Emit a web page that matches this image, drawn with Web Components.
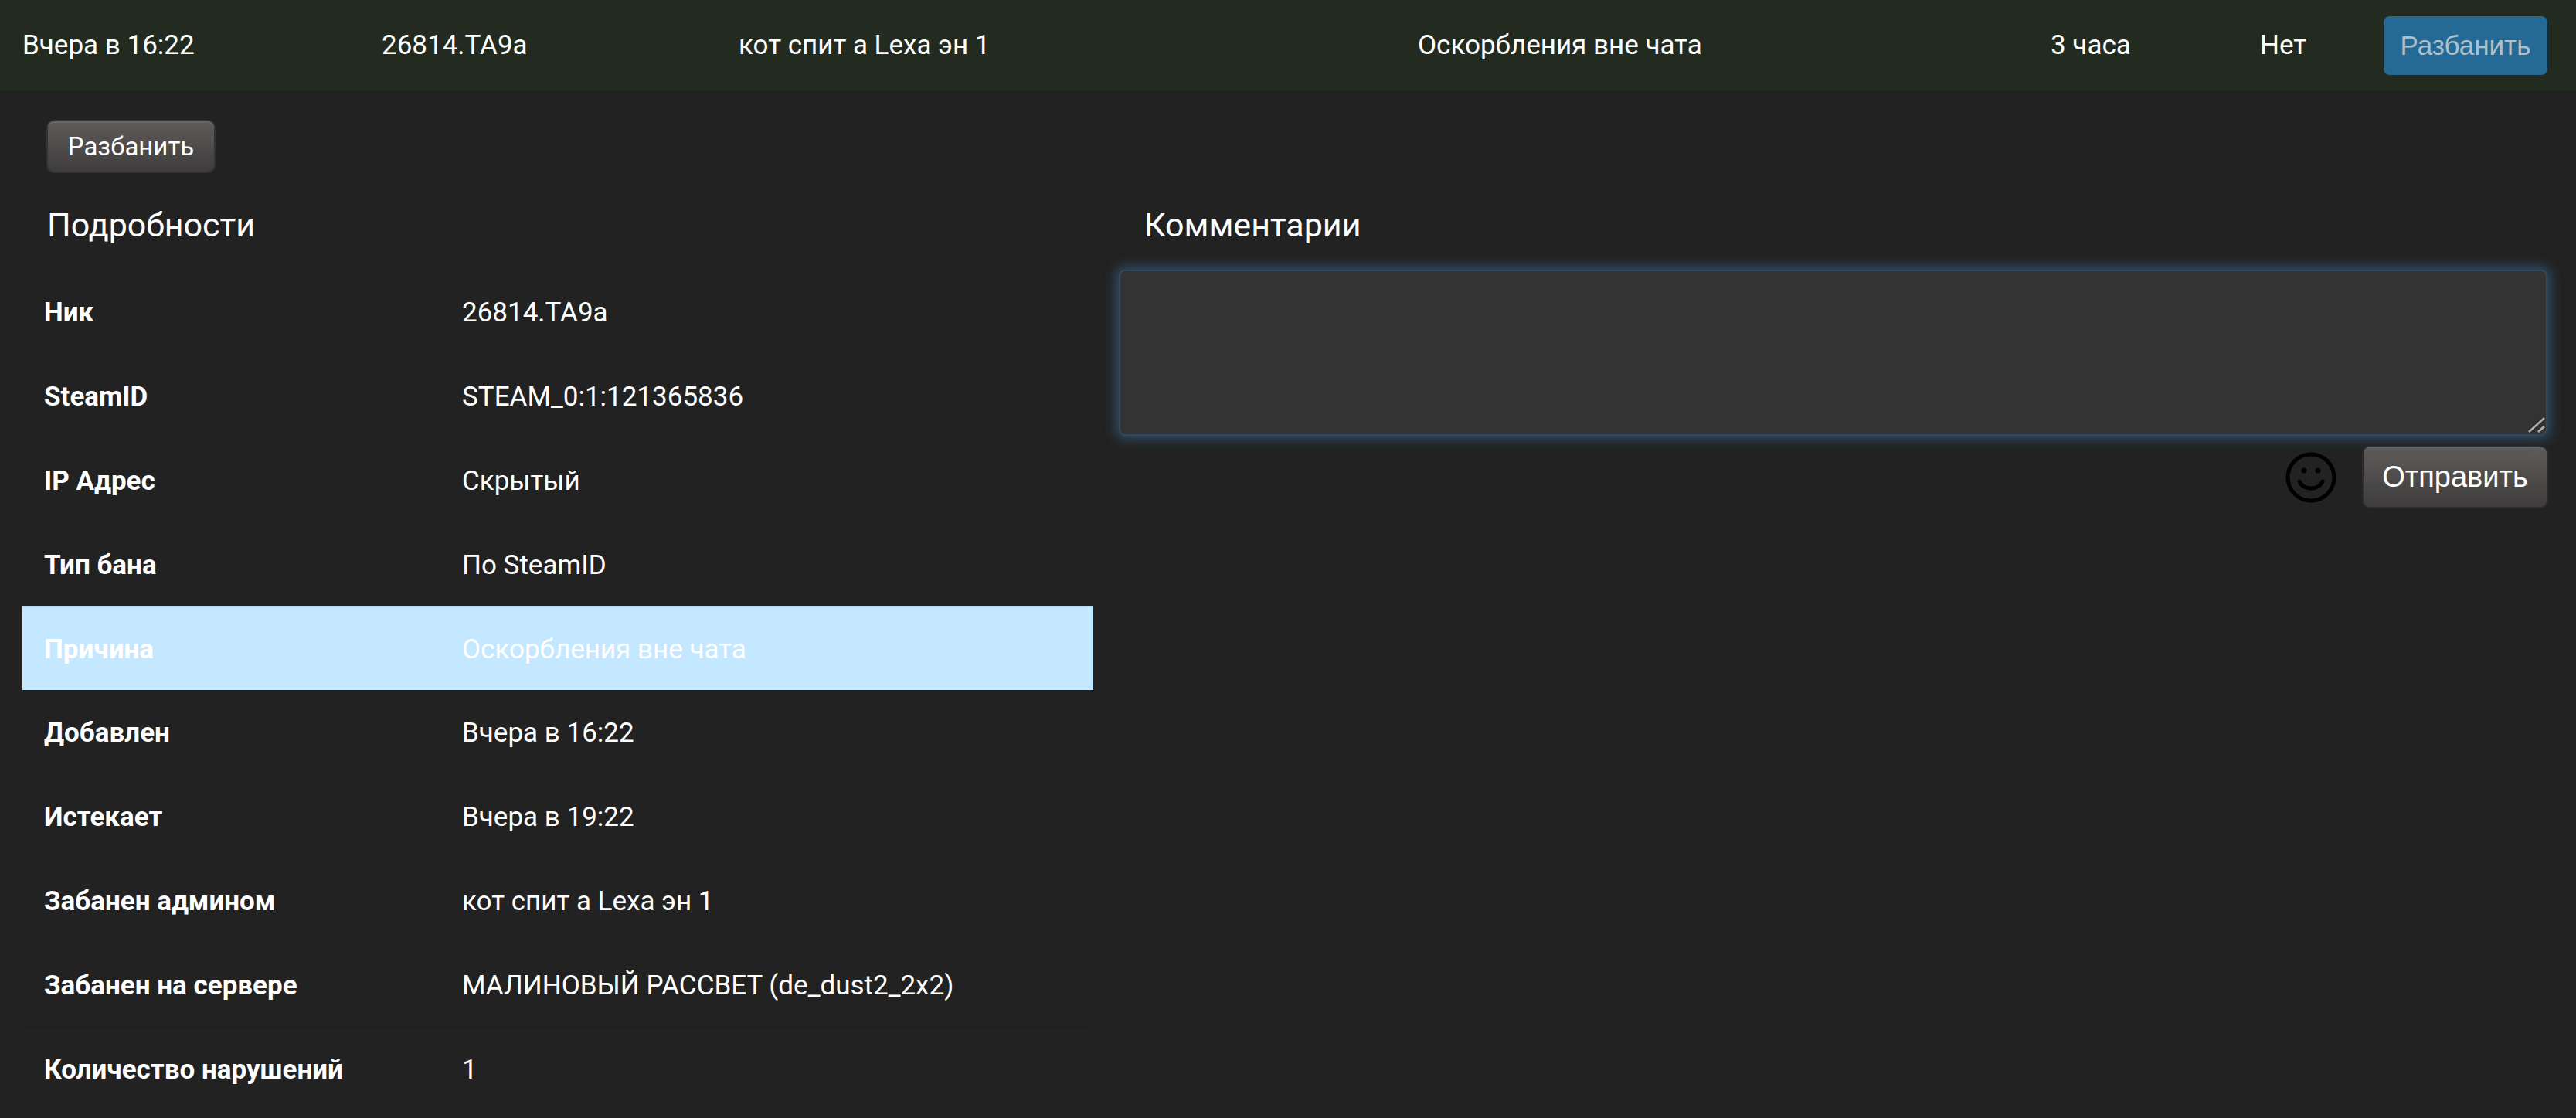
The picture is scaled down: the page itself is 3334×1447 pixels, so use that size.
<!DOCTYPE html>
<html lang="ru">
<head>
<meta charset="utf-8">
<title>Бан</title>
<style>
html, body { margin: 0; height: 100%; overflow: hidden; background: #222; }
body { font-family: Roboto, "Liberation Sans", sans-serif; font-size: 35px; color: #fff; }
</style>
</head>
<body>
<ban-page>
  <ban-summary>
    <span>Вчера в 16:22</span>
    <span>26814.TA9a</span>
    <span>кот спит а Lexa эн 1</span>
    <span>Оскорбления вне чата</span>
    <span>3 часа</span>
    <span>Нет</span>
    <ui-button variant="primary">Разбанить</ui-button>
  </ban-summary>
  <ban-details>
    <ui-button slot="action" variant="small">Разбанить</ui-button>
    <detail-row label="Ник">26814.TA9a</detail-row>
    <detail-row label="SteamID">STEAM_0:1:121365836</detail-row>
    <detail-row label="IP Адрес">Скрытый</detail-row>
    <detail-row label="Тип бана">По SteamID</detail-row>
    <detail-row label="Причина" highlight>Оскорбления вне чата</detail-row>
    <detail-row label="Добавлен">Вчера в 16:22</detail-row>
    <detail-row label="Истекает">Вчера в 19:22</detail-row>
    <detail-row label="Забанен админом">кот спит а Lexa эн 1</detail-row>
    <detail-row label="Забанен на сервере">МАЛИНОВЫЙ РАССВЕТ (de_dust2_2x2)</detail-row>
    <detail-row label="Количество нарушений">1</detail-row>
    <comment-box slot="comments"></comment-box>
  </ban-details>
</ban-page>

<script>
class BanPage extends HTMLElement {
  constructor() {
    super();
    this.attachShadow({ mode: 'open' }).innerHTML = `
<style>
:host { display: block; width: 3334px; height: 1447px; background: #222; color: #fff; }
</style>
<slot></slot>`;
  }
}

class BanSummary extends HTMLElement {
  constructor() {
    super();
    this.attachShadow({ mode: 'open' }).innerHTML = `
<style>
:host {
  display: grid;
  grid-template-columns: 465px 462px 879px 819px 271px 158px 1fr;
  align-items: center;
  height: 117px;
  padding: 0 37px 0 29px;
  box-sizing: border-box;
  background: #232b20;
}
</style>
<slot></slot>`;
  }
}

class UiButton extends HTMLElement {
  constructor() {
    super();
    this.attachShadow({ mode: 'open' }).innerHTML = `
<style>
:host {
  display: inline-flex;
  align-items: center;
  justify-content: center;
  box-sizing: border-box;
  border-radius: 8px;
  color: #fff;
  font-family: "Liberation Sans", sans-serif;
  background: linear-gradient(#5f5b5a, #3e3c3c);
  box-shadow: 0 0 0 2px #333, inset 0 2px 0 #6a6664;
}
:host([variant="primary"]) {
  width: 212px; height: 76px;
  font-size: 35px;
  color: #b0c0cb;
  background: #256a96;
  box-shadow: none;
  justify-self: end;
}
:host([variant="small"]) {
  width: 215px; height: 65px;
  margin: 2px;
  font-family: Roboto, sans-serif;
  font-size: 33px;
}
:host([variant="send"]) {
  width: 237px; height: 77px;
  margin: 1px;
  font-size: 38px;
  box-shadow: 0 0 0 2px #2c2c2c, inset 0 1px 0 #666;
}
</style>
<slot></slot>`;
  }
}

class DetailRow extends HTMLElement {
  constructor() {
    super();
    this.attachShadow({ mode: 'open' }).innerHTML = `
<style>
:host {
  display: grid;
  grid-template-columns: 568px 1fr;
  align-items: center;
  height: 108.8px;
  box-sizing: border-box;
  padding-top: 1px;
  border: 1px solid #202020;
  border-width: 2px 1px 0;
  color: #fff;
}
:host([highlight]) { background: #c4e8ff; border-color: #bcdcf0 #c4e8ff #c4e8ff; }
b { padding-left: 27px; font-weight: 700; }
</style>
<b></b><span><slot></slot></span>`;
    this.shadowRoot.querySelector('b').textContent = this.getAttribute('label');
  }
}

class CommentBox extends HTMLElement {
  constructor() {
    super();
    this.attachShadow({ mode: 'open' }).innerHTML = `
<style>
:host { display: flex; flex-direction: column; align-items: stretch; }
.field { position: relative; }
textarea {
  display: block;
  box-sizing: border-box;
  width: 100%;
  height: 215px;
  margin: 0;
  padding: 10px;
  resize: none;
  background: #333;
  border: 2px solid #2f4a60;
  border-radius: 8px;
  outline: none;
  box-shadow: 0 0 16px 4px rgba(70, 140, 200, .42);
  color: #fff;
  font: inherit;
}
/* resize grip, the native one is almost invisible here */
.grip { position: absolute; right: 2px; bottom: 3px; width: 24px; height: 22px; }
.send { display: flex; justify-content: flex-end; align-items: center; gap: 34px; margin-top: 14px; }
.smile { display: block; width: 66px; height: 66px; }
</style>
<div class="field">
  <textarea aria-label="Комментарий"></textarea>
  <svg class="grip" viewBox="0 0 24 22" fill="none">
    <path d="M2 20 L22 2 M14 20 L22 13" stroke="#222" stroke-width="5"/>
    <path d="M2 20 L22 2 M14 20 L22 13" stroke="#aaa" stroke-width="3"/>
  </svg>
</div>
<div class="send">
  <svg class="smile" viewBox="0 0 66 66" fill="none" stroke="#000" stroke-width="5" stroke-linecap="round">
    <circle cx="33" cy="33" r="30"/>
    <circle cx="24" cy="24" r="3.5" fill="#000" stroke="none"/>
    <circle cx="42" cy="24" r="3.5" fill="#000" stroke="none"/>
    <path d="M18 38 C23 50 43 50 48 38"/>
  </svg>
  <ui-button variant="send">Отправить</ui-button>
</div>`;
  }
}

class BanDetails extends HTMLElement {
  constructor() {
    super();
    this.attachShadow({ mode: 'open' }).innerHTML = `
<style>
:host {
  display: grid;
  grid-template-columns: 1386px 1fr;
  grid-template-rows: auto 125px auto;
  column-gap: 33px;
  padding: 36px 37px 0 29px;
}
.action { grid-column: 1 / 3; padding: 2px 0 0 31px; height: 69px; }
h2 {
  margin: 0;
  padding: 8px 0 0 32px;
  font-size: 43px;
  font-weight: 400;
  align-self: center;
}
h2 + h2 { padding-left: 33px; }
</style>
<div class="action"><slot name="action"></slot></div>
<h2>Подробности</h2>
<h2>Комментарии</h2>
<div class="rows"><slot></slot></div>
<div><slot name="comments"></slot></div>`;
  }
}

customElements.define('ban-page', BanPage);
customElements.define('ban-summary', BanSummary);
customElements.define('ui-button', UiButton);
customElements.define('detail-row', DetailRow);
customElements.define('comment-box', CommentBox);
customElements.define('ban-details', BanDetails);
</script>
</body>
</html>
